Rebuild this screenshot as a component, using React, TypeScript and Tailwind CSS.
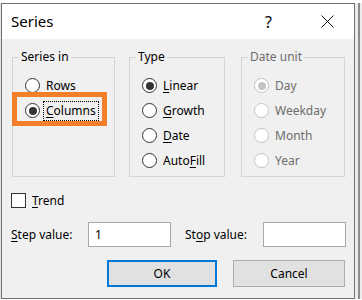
import type { ReactNode } from "react";

const font = "font-['Segoe_UI','Noto_Sans',sans-serif]";

interface RadioProps {
	label: ReactNode;
	checked?: boolean;
	disabled?: boolean;
	focused?: boolean;
}

// Win32-style radio button
function Radio({ label, checked, disabled, focused }: RadioProps) {
	return (
		<div className="flex h-[25px] items-center pl-[12px]">
			<div
				className={`flex h-[15px] w-[15px] items-center justify-center rounded-full border bg-white ${
					disabled ? "border-[#c4c4c4]" : "border-[#333333]"
				}`}
			>
				{checked && (
					<div
						className={`h-[8px] w-[8px] rounded-full ${
							disabled ? "bg-[#c4c4c4]" : "bg-[#333333]"
						}`}
					/>
				)}
			</div>
			<span
				className={`ml-[3px] flex h-[20px] items-center border px-[2px] text-[12px] ${
					focused ? "border-dotted border-black" : "border-transparent"
				} ${disabled ? "text-[#6d6d6d]" : "text-black"}`}
			>
				{label}
			</span>
		</div>
	);
}

function Key({ children }: { children: ReactNode }) {
	return <span className="underline underline-offset-2">{children}</span>;
}

function Group({
	title,
	width,
	disabled,
	children,
}: {
	title: string;
	width: string;
	disabled?: boolean;
	children: ReactNode;
}) {
	return (
		<fieldset
			className={`h-[128px] ${width} border border-[#d5d5d5] px-0 pb-0`}
		>
			<legend
				className={`ml-[6px] px-[2px] text-[12px] leading-[16px] ${
					disabled ? "text-[#6d6d6d]" : "text-black"
				}`}
			>
				{title}
			</legend>
			<div className="pt-[8px]">{children}</div>
		</fieldset>
	);
}

export default function App() {
	return (
		<div className={`relative h-[300px] w-[362px] overflow-hidden bg-white ${font}`}>
			<div className="h-[3px] bg-white" />
			<div className="flex">
				<div className="w-px bg-[#e4e4e4]" />
				{/* Dialog */}
				<div className="flex h-[296px] w-[354px] flex-col border border-[#6f6f6f] bg-[#f0f0f0]">
					{/* Title bar */}
					<div className="flex h-[35px] items-center bg-white pl-[9px] pr-[20px]">
						<span className="text-[15px] text-black">Series</span>
						<span className="ml-auto text-[16px] text-black">?</span>
						<svg
							width="13"
							height="13"
							viewBox="0 0 13 13"
							className="ml-[49px]"
						>
							<path d="M0.5 0.5 L12.5 12.5 M12.5 0.5 L0.5 12.5" stroke="#111" strokeWidth="1" />
						</svg>
					</div>

					{/* Body */}
					<div className="flex flex-col text-[12px] text-black">
						<div className="flex pl-[10px] pt-[10px]">
							<Group title="Series in" width="w-[103px]">
								<Radio
									label={
										<>
											<Key>R</Key>ows
										</>
									}
								/>
								<Radio
									checked
									focused
									label={
										<>
											<Key>C</Key>olumns
										</>
									}
								/>
							</Group>
							<div className="ml-[14px]">
								<Group title="Type" width="w-[96px]">
									<Radio
										checked
										label={
											<>
												<Key>L</Key>inear
											</>
										}
									/>
									<Radio
										label={
											<>
												<Key>G</Key>rowth
											</>
										}
									/>
									<Radio
										label={
											<>
												<Key>D</Key>ate
											</>
										}
									/>
									<Radio
										label={
											<>
												Auto<Key>F</Key>ill
											</>
										}
									/>
								</Group>
							</div>
							<div className="ml-[16px]">
								<Group title="Date unit" width="w-[104px]" disabled>
									<Radio disabled checked label="Day" />
									<Radio disabled label="Weekday" />
									<Radio disabled label="Month" />
									<Radio disabled label="Year" />
								</Group>
							</div>
						</div>

						{/* Trend */}
						<div className="mt-[16px] flex h-[15px] items-center pl-[9px]">
							<div className="h-[15px] w-[15px] border border-[#333333] bg-white" />
							<span className="ml-[6px]">
								<Key>T</Key>rend
							</span>
						</div>

						{/* Step / Stop */}
						<div className="mt-[14px] flex h-[25px] items-center pl-[9px]">
							<span className="w-[77px]">
								<Key>S</Key>tep value:
							</span>
							<div className="flex h-[25px] w-[83px] items-center border border-[#a8a8a8] bg-white pl-[6px]">
								1
							</div>
							<span className="ml-[14px] w-[78px]">
								St<Key>o</Key>p value:
							</span>
							<div className="h-[25px] w-[83px] border border-[#a8a8a8] bg-white" />
						</div>

						{/* Buttons */}
						<div className="mt-[13px] flex h-[27px] pl-[105px]">
							<button
								type="button"
								className="h-[27px] w-[110px] border-2 border-[#0078d7] bg-[#e1e1e1] text-[12px]"
							>
								OK
							</button>
							<button
								type="button"
								className="ml-[16px] h-[27px] w-[112px] border border-[#adadad] bg-[#e1e1e1] text-[12px]"
							>
								Cancel
							</button>
						</div>
					</div>
				</div>
				{/* Sheet behind, right edge */}
				<div className="flex flex-1 bg-[#ececec]">
					<div className="w-[3px]" />
					<div className="w-[2px] bg-[#8c8c8c]" />
				</div>
			</div>

			{/* Orange highlight over "Columns" */}
			<div className="absolute left-[12px] top-[92px] h-[34px] w-[95px] border-[5px] border-[#f47f2a]" />
		</div>
	);
}
